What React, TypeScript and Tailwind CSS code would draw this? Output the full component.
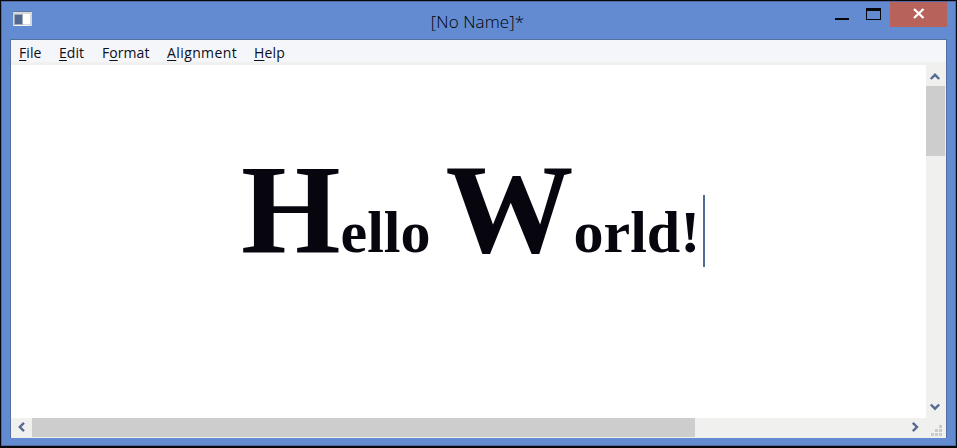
import React from 'react';

const menus = [
  { before: '', key: 'F', after: 'ile', box: 'w-10', text: 'tracking-[0.1px]' },
  { before: '', key: 'E', after: 'dit', box: 'w-[43px]', text: 'tracking-[0.05px]' },
  { before: 'F', key: 'o', after: 'rmat', box: 'w-[65px]', text: 'tracking-[0.05px]' },
  { before: '', key: 'A', after: 'lignment', box: 'w-[87px]', text: 'tracking-[0.4px]' },
  { before: '', key: 'H', after: 'elp', box: 'w-[50px]', text: 'tracking-[0.2px]' },
];

function Chevron({ d }: { d: string }) {
  return (
    <svg width="12" height="12" viewBox="0 0 12 12" fill="none" stroke="#566a96" strokeWidth="2.4" className="block shrink-0">
      <path d={d} />
    </svg>
  );
}

function TitleBar() {
  return (
    <header className="relative flex h-[37px] shrink-0 justify-between">
      <svg width="20" height="16" viewBox="0 0 20 16" className="mt-[9px] ml-[10px]" shapeRendering="crispEdges">
        <rect x="1" y="0" width="18" height="1" fill="#6179a9" />
        <rect x="0" y="2" width="1" height="2" fill="#6179a9" />
        <rect x="1" y="1" width="19" height="14" fill="#d6d9d9" />
        <rect x="2" y="3" width="9" height="11" fill="#a3acba" />
        <rect x="3" y="4" width="7" height="9" fill="#53688f" />
        <rect x="11" y="3" width="7" height="10" fill="#fff" />
        <rect x="2" y="14" width="16" height="1" fill="#f2f3f2" />
      </svg>
      <h1 className="absolute inset-x-0 top-[8px] pr-[2px] text-center font-['Open_Sans',sans-serif] text-[17px] leading-6 font-light tracking-[0.1px] text-black">
        [No Name]*
      </h1>
      <div className="flex">
        <svg width="55" height="26" viewBox="0 0 55 26" shapeRendering="crispEdges">
          <rect x="0" y="16" width="14" height="2" fill="#07070e" />
          <path d="M31 6h15v12H31zM32 9v8h13V9z" fill="#07070e" fillRule="evenodd" />
        </svg>
        <div className="mr-[8px] flex h-[25px] w-[57px] items-center justify-center bg-[#b7635b]">
          <svg width="12" height="11" viewBox="0 0 12 11" className="-mt-0.5" stroke="#fff" strokeWidth="2.3">
            <path d="M1 1l9.5 9M10.5 1L1 10" />
          </svg>
        </div>
      </div>
    </header>
  );
}

function VerticalBar() {
  return (
    <div className="flex w-5 shrink-0 flex-col items-center bg-[#f0f0ee]">
      <div className="flex h-[21px] items-center justify-center pt-[2px] pr-[2px]"><Chevron d="M1.8 8L6 3.8 10.2 8" /></div>
      <div className="mr-px h-[70px] w-[19px] bg-[#cdcdcd]" />
      <div className="mt-auto flex h-[22px] items-center pr-[2px]"><Chevron d="M1.8 3.5L6 7.7 10.2 3.5" /></div>
    </div>
  );
}

function HorizontalBar() {
  return (
    <div className="flex h-5 shrink-0 bg-[#f0f0ee]">
      <div className="flex w-[21px] items-center justify-center pb-[2px]"><Chevron d="M8 1.8L3.8 6 8 10.2" /></div>
      <div className="h-[19px] w-[663px] bg-[#cdcdcd]" />
      <div className="ml-auto flex w-[22px] items-center justify-center pb-[2px]"><Chevron d="M3.8 1.8L8 6 3.8 10.2" /></div>
      <svg width="20" height="20" viewBox="0 0 20 20" fill="#cacaca" shapeRendering="crispEdges">
        <path d="M13 7h3v3h-3zM9 11h3v3H9zM13 11h3v3h-3zM5 15h3v3H5zM9 15h3v3H9zM13 15h3v3h-3z" />
      </svg>
    </div>
  );
}

export default function App() {
  return (
    <div className="flex h-[448px] w-[957px] flex-col border border-b-2 border-[#08080e] bg-[#638bd2]">
      <div className="flex min-h-0 flex-1 flex-col border border-[#526a9e]">
        <TitleBar />
        <main className="mr-[8px] mb-[7px] ml-2 flex min-h-0 flex-1 flex-col border-t border-r border-l border-[#53709f] bg-white">
          <nav className="flex h-[25px] shrink-0 border-b-3 border-[#f0f0ee] bg-[#f4f6fa] pl-[8px] font-['Open_Sans',sans-serif] text-[14px] leading-[26px] font-medium text-[#0b0e1c]">
            {menus.map((menu) => (
              <div key={menu.key} className={menu.box}>
                <span className={menu.text}>
                  {menu.before}<span className="underline underline-offset-2">{menu.key}</span>{menu.after}
                </span>
              </div>
            ))}
          </nav>
          <div className="flex min-h-0 flex-1">
            <section className="flex min-w-0 flex-1 overflow-hidden pt-[73px] pl-[230px]">
              <p className="h-[142px] font-['Liberation_Serif',serif] text-[60px] leading-[142px] font-bold whitespace-nowrap text-[#07060e]">
                <span className="text-[128px]">H</span>ello <span className="text-[128px]">W</span>orld!
              </p>
              <div className="mt-[57px] ml-[3px] h-[72px] w-0.5 bg-[#526b94]" />
            </section>
            <VerticalBar />
          </div>
          <HorizontalBar />
        </main>
      </div>
    </div>
  );
}
